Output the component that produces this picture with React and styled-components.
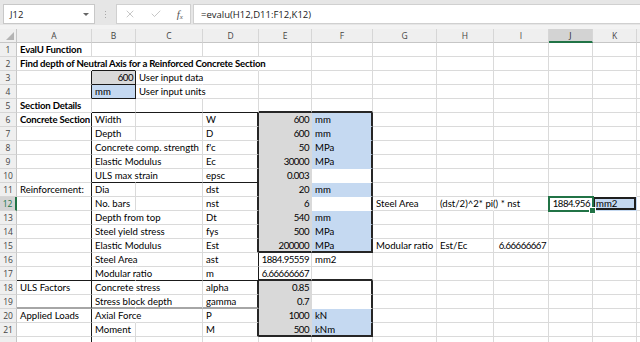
import React from 'react'
import styled, { createGlobalStyle, css } from 'styled-components'
import { X, Check } from 'lucide-react'

const GlobalStyle = createGlobalStyle`
  html, body {
    margin: 0;
    padding: 0;
    background: #fff;
  }
  body {
    width: 640px;
    height: 342px;
    overflow: hidden;
    font-family: Lato, "Open Sans", sans-serif;
  }
`

const COLS = ['A', 'B', 'C', 'D', 'E', 'F', 'G', 'H', 'I', 'J', 'K', 'L']
const WIDTHS = [75, 44, 67, 56, 53, 61, 64, 57, 55, 44, 44]

const FILLS = { grey: '#d9d9d9', blue: '#c5d9f1' }
const LINES = {
  grid: '1px solid #dadada',
  hidden: '1px solid transparent',
  none: '1px solid transparent',
  thin: '1px solid #1a1a1a',
  med: '2px solid #262626',
  grey: '2px solid #a6a6a6'
}

// sheet content, row -> column -> cell
const rows = {
  1: { A: { t: 'EvalU Function', bold: 1 } },
  2: {
    A: { t: 'Find depth of Neutral Axis for a Reinforced Concrete Section', bold: 1, r: 'none' },
    B: { r: 'none', b: 'thin' },
    C: { r: 'none' },
    D: { r: 'none' }
  },
  3: {
    A: { r: 'thin' },
    B: { t: '600', a: 'r', fill: 'grey', r: 'thin', b: 'thin' },
    C: { t: 'User input data', r: 'none' }
  },
  4: {
    A: { r: 'thin' },
    B: { t: 'mm', fill: 'blue', r: 'thin', b: 'thin' },
    C: { t: 'User input units', r: 'none' }
  },
  5: {
    A: { t: 'Section Details', bold: 1 },
    B: { b: 'thin' }, C: { b: 'thin' }, D: { b: 'thin' },
    E: { b: 'med' }, F: { b: 'med' }
  },
  6: {
    A: { t: 'Concrete Section', bold: 1, r: 'thin' },
    B: { t: 'Width' }, D: { t: 'W', r: 'med' },
    E: { t: '600', a: 'r', fill: 'grey' }, F: { t: 'mm', fill: 'blue', r: 'med' }
  },
  7: {
    A: { r: 'thin' }, B: { t: 'Depth' }, D: { t: 'D', r: 'med' },
    E: { t: '600', a: 'r', fill: 'grey' }, F: { t: 'mm', fill: 'blue', r: 'med' }
  },
  8: {
    A: { r: 'thin' }, B: { t: 'Concrete comp. strength', r: 'none' }, D: { t: "f'c", r: 'med' },
    E: { t: '50', a: 'r', fill: 'grey' }, F: { t: 'MPa', fill: 'blue', r: 'med' }
  },
  9: {
    A: { r: 'thin' }, B: { t: 'Elastic Modulus', r: 'none' }, D: { t: 'Ec', r: 'med' },
    E: { t: '30000', a: 'r', fill: 'grey' }, F: { t: 'MPa', fill: 'blue', r: 'med' }
  },
  10: {
    A: { r: 'thin' }, B: { t: 'ULS max strain', r: 'none', b: 'thin' }, C: { b: 'thin' },
    D: { t: 'epsc', r: 'med', b: 'thin' },
    E: { t: '0.003', a: 'r', fill: 'grey' }, F: { r: 'med' }
  },
  11: {
    A: { t: 'Reinforcement:', r: 'thin' }, B: { t: 'Dia' }, D: { t: 'dst', r: 'med' },
    E: { t: '20', a: 'r', fill: 'grey' }, F: { t: 'mm', fill: 'blue', r: 'med' }
  },
  12: {
    A: { r: 'thin' }, B: { t: 'No. bars' }, D: { t: 'nst', r: 'med' },
    E: { t: '6', a: 'r', fill: 'grey' }, F: { r: 'med' },
    G: { t: 'Steel Area' }, H: { t: '(dst/2)^2* pi() * nst', r: 'none' },
    J: { t: '1884.956', a: 'r', selected: 1 },
    K: { t: 'mm2', fill: 'blue', boxed: 1 }
  },
  13: {
    A: { r: 'thin' }, B: { t: 'Depth from top', r: 'none' }, D: { t: 'Dt', r: 'med' },
    E: { t: '540', a: 'r', fill: 'grey' }, F: { t: 'mm', fill: 'blue', r: 'med' }
  },
  14: {
    A: { r: 'thin' }, B: { t: 'Steel yield stress', r: 'none' }, D: { t: 'fys', r: 'med' },
    E: { t: '500', a: 'r', fill: 'grey' }, F: { t: 'MPa', fill: 'blue', r: 'med' }
  },
  15: {
    A: { r: 'thin' }, B: { t: 'Elastic Modulus', r: 'none' }, D: { t: 'Est', r: 'med' },
    E: { t: '200000', a: 'r', fill: 'grey', b: 'med' }, F: { t: 'MPa', fill: 'blue', r: 'med', b: 'med' },
    G: { t: 'Modular ratio' }, H: { t: 'Est/Ec' }, I: { t: '6.66666667', a: 'r' }
  },
  16: {
    A: { r: 'thin' }, B: { t: 'Steel Area', r: 'none' }, D: { t: 'ast', r: 'thin' },
    E: { t: '1884.95559', a: 'r' }, F: { t: 'mm2' }
  },
  17: {
    A: { r: 'thin', b: 'thin' }, B: { t: 'Modular ratio', r: 'none', b: 'thin' }, C: { b: 'thin' },
    D: { t: 'm', r: 'thin', b: 'thin' },
    E: { t: '6.66666667', a: 'r', b: 'med' }, F: { b: 'med' }
  },
  18: {
    A: { t: 'ULS Factors', r: 'thin' }, B: { t: 'Concrete stress', r: 'none' }, D: { t: 'alpha', r: 'med' },
    E: { t: '0.85', a: 'r', fill: 'grey' }, F: { r: 'med' }
  },
  19: {
    A: { r: 'thin', b: 'grey' }, B: { t: 'Stress block depth', r: 'none', b: 'grey' }, C: { b: 'grey' },
    D: { t: 'gamma', r: 'med', b: 'grey' },
    E: { t: '0.7', a: 'r', fill: 'grey' }, F: { r: 'med' }
  },
  20: {
    A: { t: 'Applied Loads', r: 'thin' }, B: { t: 'Axial Force', r: 'none' }, D: { t: 'P', r: 'med' },
    E: { t: '1000', a: 'r', fill: 'grey' }, F: { t: 'kN', fill: 'blue', r: 'med' }
  },
  21: {
    A: { r: 'thin' }, B: { t: 'Moment' }, D: { t: 'M', r: 'med' },
    E: { t: '500', a: 'r', fill: 'grey', b: 'med' }, F: { t: 'kNm', fill: 'blue', r: 'med', b: 'med' }
  },
  22: { A: { r: 'thin' } }
}

const ROW_COUNT = 22

const cellAt = (row, ci) => (rows[row] && rows[row][COLS[ci]]) || {}

// gridlines disappear next to filled cells, like in Excel
const edge = (row, ci, side) => {
  const cell = cellAt(row, ci)
  const spec = side === 'r' ? cell.r : cell.b
  if (spec) return LINES[spec]
  const next = side === 'r' ? cellAt(row, ci + 1) : cellAt(row + 1, ci)
  if (cell.fill || next.fill) return LINES.hidden
  return LINES.grid
}

const Window = styled.div`
  width: 640px;
  height: 342px;
  overflow: hidden;
  display: flex;
  flex-direction: column;
  background: #fff;
`

const FormulaBar = styled.div`
  height: 29px;
  box-sizing: border-box;
  flex: none;
  display: flex;
  align-items: flex-start;
  padding: 4px 0 0 3px;
  background: linear-gradient(#e6e6e6 0 25px, #f3f3f3 25px);
`

const NameBox = styled.div`
  width: 92px;
  height: 20px;
  box-sizing: border-box;
  display: flex;
  align-items: center;
  justify-content: space-between;
  padding: 0 5px 0 6px;
  background: #fff;
  border: 1px solid #c8c8c8;
  font-family: "Open Sans", sans-serif;
  font-size: 9.5px;
  color: #222;
`

const DropArrow = styled.span`
  width: 0;
  height: 0;
  border-left: 3px solid transparent;
  border-right: 3px solid transparent;
  border-top: 3px solid #666;
`

const Grip = styled.div`
  width: 21px;
  height: 20px;
  display: flex;
  flex-direction: column;
  align-items: center;
  justify-content: center;
  gap: 2px;

  span {
    width: 1px;
    height: 1px;
    background: #a8a8a8;
  }
`

const FxGroup = styled.div`
  width: 75px;
  height: 20px;
  box-sizing: border-box;
  display: flex;
  align-items: center;
  justify-content: space-around;
  background: #fff;
  border: 1px solid #d0d0d0;
  color: #a8a8a8;
  margin-right: 2px;
`

const FxLabel = styled.span`
  font-family: "Liberation Serif", serif;
  font-style: italic;
  font-size: 11px;
  color: #555;

  sub {
    font-size: 7px;
    vertical-align: -1px;
  }
`

const FormulaInput = styled.div`
  flex: 1;
  height: 20px;
  box-sizing: border-box;
  display: flex;
  align-items: center;
  padding-left: 7px;
  background: #fff;
  border: 1px solid #d0d0d0;
  border-right: none;
  font-family: "Open Sans", sans-serif;
  font-size: 9.5px;
  color: #222;
`

const Sheet = styled.div`
  display: grid;
  grid-template-columns: 17px ${WIDTHS.map(w => w + 'px').join(' ')} 1fr;
  grid-auto-rows: 14px;
`

const headerBase = css`
  box-sizing: border-box;
  display: flex;
  align-items: center;
  justify-content: center;
  font-family: "Open Sans", sans-serif;
  font-size: 8.5px;
  color: #444;
  background: #efefef;
`

const Corner = styled.div`
  ${headerBase};
  justify-content: flex-end;
  align-items: flex-end;
  padding: 0 2px 2px 0;
  border-right: 1px solid #c6c6c6;
  border-bottom: 1px solid #c6c6c6;
`

const ColHead = styled.div`
  ${headerBase};
  border-right: 1px solid #d6d6d6;
  border-bottom: ${p => (p.$active ? '2px solid #217346' : '1px solid #c6c6c6')};
  background: ${p => (p.$active ? '#d3d3d3' : '#efefef')};
  color: ${p => (p.$active ? '#262626' : '#444')};
`

const RowHead = styled.div`
  ${headerBase};
  border-bottom: 1px solid #d6d6d6;
  border-right: ${p => (p.$active ? '2px solid #217346' : '1px solid #c6c6c6')};
  background: ${p => (p.$active ? '#d3d3d3' : '#efefef')};
  color: ${p => (p.$active ? '#217346' : '#444')};
`

const Cell = styled.div`
  position: relative;
  box-sizing: border-box;
  min-width: 0;
  padding: ${p => (p.$align === 'r' ? '0 2px 0 0' : '0 0 0 3px')};
  text-align: ${p => (p.$align === 'r' ? 'right' : 'left')};
  direction: ${p => (p.$align === 'r' ? 'rtl' : 'ltr')};
  white-space: nowrap;
  overflow: visible;
  font-family: Lato, "Open Sans", sans-serif;
  font-size: 9.6px;
  line-height: 13px;
  letter-spacing: ${p => (p.$align === 'r' ? '-0.5px' : p.$bold ? '-0.2px' : '0')};
  font-weight: ${p => (p.$bold ? 700 : 400)};
  color: #000;
  background: ${p => (p.$fill ? FILLS[p.$fill] : 'transparent')};
  border-right: ${p => p.$right};
  border-bottom: ${p => p.$bottom};

  ${p => p.$boxed && css`
    box-shadow: inset 0 0 0 2px #1f1f1f;
  `}

  ${p => p.$selected && css`
    z-index: 2;
    outline: 2px solid #217346;
    outline-offset: -1px;
  `}
`

const Handle = styled.span`
  position: absolute;
  right: -4px;
  bottom: -4px;
  width: 5px;
  height: 5px;
  background: #217346;
  border: 1px solid #fff;
`

const CornerMark = () => (
  <svg width="8" height="8" viewBox="0 0 8 8">
    <polygon points="8,0 8,8 0,8" fill="#b4b4b4" />
  </svg>
)

const SheetRow = ({ row }) => (
  <>
    <RowHead $active={row === 12}>{row < ROW_COUNT ? row : ''}</RowHead>
    {COLS.map((col, ci) => {
      const cell = cellAt(row, ci)
      return (
        <Cell
          key={col}
          $align={cell.a}
          $bold={cell.bold}
          $fill={cell.fill}
          $boxed={cell.boxed}
          $selected={cell.selected}
          $right={edge(row, ci, 'r')}
          $bottom={edge(row, ci, 'b')}
        >
          {cell.a === 'r' ? <bdi>{cell.t}</bdi> : cell.t}
          {cell.selected && <Handle />}
        </Cell>
      )
    })}
  </>
)

const App = () => {
  const rowNumbers = Array.from({ length: ROW_COUNT }, (_, i) => i + 1)

  return (
    <Window>
      <GlobalStyle />
      <FormulaBar>
        <NameBox>
          J12
          <DropArrow />
        </NameBox>
        <Grip>
          <span />
          <span />
          <span />
        </Grip>
        <FxGroup>
          <X size={12} strokeWidth={1.3} />
          <Check size={12} strokeWidth={1.3} />
          <FxLabel>
            f<sub>x</sub>
          </FxLabel>
        </FxGroup>
        <FormulaInput>=evalu(H12,D11:F12,K12)</FormulaInput>
      </FormulaBar>
      <Sheet>
        <Corner>
          <CornerMark />
        </Corner>
        {COLS.map(col => (
          <ColHead key={col} $active={col === 'J'}>
            {col === 'L' ? '' : col}
          </ColHead>
        ))}
        {rowNumbers.map(row => (
          <SheetRow key={row} row={row} />
        ))}
      </Sheet>
    </Window>
  )
}

export default App
